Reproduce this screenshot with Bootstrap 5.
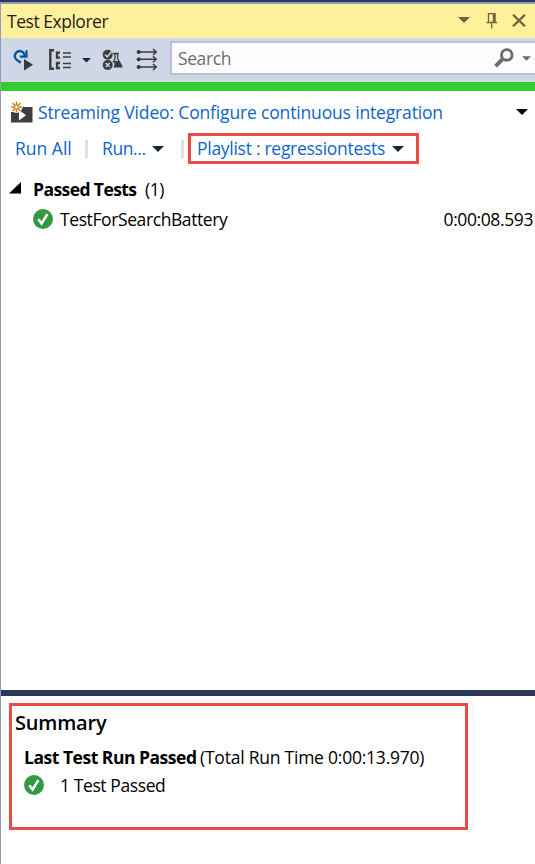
<!DOCTYPE html>
<html lang="en">
<head>
<meta charset="utf-8">
<title>Test Explorer</title>
<link href="https://cdn.jsdelivr.net/npm/bootstrap@5.3.0/dist/css/bootstrap.min.css" rel="stylesheet">
<style>
body{font-family:"Open Sans","Noto Sans",sans-serif;font-size:17.5px;line-height:30px;letter-spacing:-.4px;color:#000;background:#fff;white-space:nowrap}
svg{display:block;flex:none}
.panel{height:864px;border-top:2px solid #293955;overflow:hidden}
.frame{border-top:2px solid #8e9bbc;border-left:1px solid #8e9bbc}
.title-strip{height:34px;background:#fff09b;color:#1e1e1e;padding:0 9px 0 6px}
.title-strip span{letter-spacing:-.47px}
.brown{color:#75633d}
.gray{color:#6b6b6b}
.navy{color:#1b293e}
.pin{margin-left:16px}
.close-x{margin-left:14px}
.title-strip svg{margin-bottom:2px}
.tools{height:44px;background:#cfd6e5}
.search-field{width:365px;height:34px;border:2px solid #b8c1d3;border-right:0;background:#fcfcfc;color:#6d6d6d;padding:0 4px 0 6px;margin-top:3px}
.search-field .gray{margin-left:8px}
.progress-line{height:9px;background:#3c3}
.lnk{color:#0e65c9;text-decoration:none}
.build-row{height:30px;margin-top:6px;padding:0 7px 0 10px}
.build-row .lnk{letter-spacing:-.16px;margin-left:5px}
.run-row{height:31px;margin-top:6px;padding-left:14px}
.run-row>.lnk,.run-row .playlist-box .lnk{padding-bottom:2px}
.run-all{letter-spacing:0;width:70px}
.run-menu{margin-left:14px;width:44px}
.run-row>.navy{margin:0 17px 0 6px}
.sep{width:3px;height:18px;background:#e0e0e0}
.red-outline{border:3px solid #e94b45}
.playlist-box{width:231px;height:31px;padding-left:6px;margin-left:4px}
.playlist-box .lnk{letter-spacing:-.28px;width:195px}
.group-row{height:30px;margin-top:10px;padding-left:8px}
.group-row svg{margin-top:-3px}
.group-row .fw-bold{letter-spacing:-.58px;margin-left:12px;width:112px}
.test-row{height:30px;padding:0 2px 0 32px}
.test-row svg{margin-right:7px}
.results{height:599px}
.splitter{height:6px;background:#293955}
.summary-box{width:459px;height:127px;margin:7px 0 0 8px;padding:2px 0 0 3px}
.summary-title{font-size:20px;font-weight:600;line-height:30px;letter-spacing:-.2px}
.last-run{height:30px;margin-top:4px;padding-left:9px}
.last-run .fw-bold{letter-spacing:-.48px;width:176px}
.last-run .total{letter-spacing:-.23px}
.count-row{height:28px;margin-top:-1px;padding-left:9px}
.count-row svg{margin-right:16px}
</style>
<script src="https://cdn.jsdelivr.net/npm/bootstrap@5.3.0/dist/js/bootstrap.bundle.min.js"></script>
</head>
<body>
<svg width="0" height="0" class="position-absolute">
<symbol id="pass" viewBox="0 0 20 20"><circle cx="10" cy="10" r="10" fill="#339a44"/><path d="M5.300 10.300l3.300 4.200 5.800-9.300" fill="none" stroke="#fff" stroke-width="2.500"/></symbol>
<symbol id="down" viewBox="0 0 12 6"><path d="M0 0h12L6 6z" fill="currentColor"/></symbol>
</svg>
<div class="panel"><div class="frame h-100 d-flex flex-column">

<header class="title-strip d-flex align-items-center">
<span>Test Explorer</span>
<svg class="ms-auto brown" width="12" height="6"><use href="#down"/></svg>
<svg class="pin" width="12" height="17" viewBox="0 0 12 17" fill="none" stroke="#75633d" stroke-width="1.300"><path d="M2.500 10V1.600h6.500V10M.5 10.500h10.500M5.700 10.500V16.500"/><path d="M8 1v9.500" stroke-width="2.400"/></svg>
<svg class="close-x" width="14" height="13" viewBox="0 0 14 13" fill="none" stroke="#75633d" stroke-width="2.300"><path d="M1 .7l12 11.600M13 .7l-12 11.600"/></svg>
</header>

<div class="tools d-flex">
<svg width="169" height="44" viewBox="1 38 169 44">
<path d="M20.800 62.800l-3.700-2.700C14.200 58 14 54.500 16.500 52.300C19 50 22.500 51 24 53.500L25 57" fill="none" stroke="#07519a" stroke-width="2.300"/><path d="M19.800 56.700h6.700v-6.400" fill="none" stroke="#07519a" stroke-width="2.200"/>
<path d="M24 59v11.500l9-5.800z" fill="#393939"/>
<g fill="none" stroke="#3c3c3c"><path d="M54 50.200h-3.700v18.600H54" stroke-width="2.400"/><path d="M60 52.700h-3v5h3M60 63h-3v5h3" stroke-width="2.300"/><path d="M63 53h8M63 57h8M63 63.500h8M63 67.500h8" stroke-width="1.300"/></g>
<path d="M82 58h9l-4.500 4.500z" fill="#1b293e"/>
<circle cx="107.700" cy="54.700" r="5" fill="#3c3c3c"/><path d="M105 54.500l2.200 2.400 4.500-5.400" fill="none" stroke="#cfd6e5" stroke-width="1.500"/>
<circle cx="107.700" cy="65" r="5" fill="#3c3c3c"/><path d="M105.700 63l4 4m0-4l-4 4" stroke="#cfd6e5" stroke-width="1.500"/>
<path d="M113 53.500h6M115 53.500v5l-2 4M117.600 53.500v5l4 7.500" fill="none" stroke="#3c3c3c" stroke-width="1.300"/><path d="M114 61h5l4 6.500H113.500l1-3z" fill="#3c3c3c"/>
<g fill="none" stroke="#3c3c3c" stroke-width="1.500"><path d="M138 52h18M138 59.300h18M138 67h18M153 49l3.200 3-3.200 3M153 56.300l3.200 3-3.200 3M153 64l3.200 3-3.200 3"/></g>
<g fill="#3c3c3c"><circle cx="138.700" cy="52" r="2.100"/><circle cx="138.700" cy="59.300" r="2.100"/><circle cx="138.700" cy="67" r="2.100"/></g>
</svg>
<div class="search-field d-flex align-items-center"><span>Search</span>
<svg class="ms-auto" width="20" height="20" viewBox="0 0 20 20" fill="none" stroke="#6b6b6b"><circle cx="12.800" cy="6.900" r="5.300" stroke-width="2.900"/><path d="M8.600 11.200L1.600 18.200" stroke-width="4"/></svg>
<svg class="gray" width="9" height="5"><use href="#down"/></svg>
</div>
</div>
<div class="progress-line"></div>

<main class="results">
<div class="build-row d-flex align-items-center">
<svg width="22" height="22" viewBox="0 0 22 22"><path d="M0 11h4l4-5h13.500v15.500H0z" fill="#3f3f3f"/><path d="M8 9v10.500l7-5.200z" fill="#fff"/><circle cx="5.500" cy="6" r="6" fill="#fff"/><path d="M5.500 .5v11M0 6h11M1.600 2.100l7.800 7.800M9.400 2.100L1.600 9.900" stroke="#ce8128" stroke-width="1.500"/><circle cx="5.500" cy="6" r="1.300" fill="#fff"/></svg>
<a class="lnk" href="#">Streaming Video: Configure continuous integration</a>
<svg class="ms-auto" width="12" height="6"><use href="#down"/></svg>
</div>
<div class="run-row d-flex align-items-center">
<a class="lnk run-all" href="#">Run All</a><span class="sep"></span>
<a class="lnk run-menu" href="#">Run...</a>
<svg class="navy" width="12" height="6"><use href="#down"/></svg>
<span class="sep"></span>
<div class="red-outline playlist-box d-flex align-items-center">
<a class="lnk" href="#">Playlist : regressiontests</a>
<svg class="navy" width="12" height="6"><use href="#down"/></svg>
</div>
</div>
<div class="group-row d-flex align-items-center">
<svg width="12" height="12" viewBox="0 0 12 12"><path d="M12 0v11.500H0z"/></svg>
<span class="fw-bold">Passed Tests</span><span>(1)</span>
</div>
<div class="test-row d-flex align-items-center">
<svg width="20" height="20"><use href="#pass"/></svg><span>TestForSearchBattery</span><span class="ms-auto">0:00:08.593</span>
</div>
</main>

<div class="splitter"></div>
<section class="summary-box red-outline">
<div class="summary-title">Summary</div>
<div class="last-run d-flex"><span class="fw-bold">Last Test Run Passed</span><span class="total">(Total Run Time 0:00:13.970)</span></div>
<div class="count-row d-flex align-items-center"><svg width="20" height="20"><use href="#pass"/></svg><span>1 Test Passed</span></div>
</section>

</div></div>
</body>
</html>
